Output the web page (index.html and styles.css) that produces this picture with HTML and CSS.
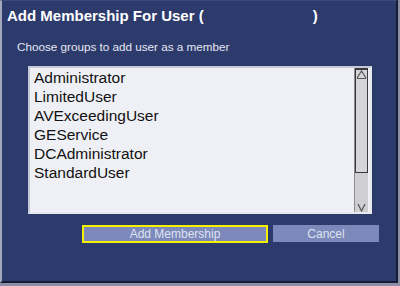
FILE: index.html
```html
<!DOCTYPE html>
<html lang="en">
<head>
    <meta charset="UTF-8">
    <title>Add Membership For User</title>
    <link rel="stylesheet" href="styles.css">
</head>
<body>
    <div class="dialog">
        <h1>Add Membership For User (<span class="user-name"></span>)</h1>
        <p class="hint">Choose groups to add user as a member</p>

        <div class="listbox">
            <ul class="group-list">
                <li>Administrator</li>
                <li>LimitedUser</li>
                <li>AVExceedingUser</li>
                <li>GEService</li>
                <li>DCAdministrator</li>
                <li>StandardUser</li>
            </ul>
            <div class="scrollbar">
                <div class="thumb">
                    <svg width="11" height="9" viewBox="0 0 11 9"><path d="M1 8 L5.5 1 L10 8" fill="none" stroke="#555" stroke-width="1.2"/><path d="M1 8.5 H10" stroke="#555"/></svg>
                </div>
                <div class="arrow-down">
                    <svg width="11" height="9" viewBox="0 0 11 9"><path d="M2 1 L5.5 8 L9 1" fill="none" stroke="#555" stroke-width="1.2"/></svg>
                </div>
            </div>
        </div>

        <div class="actions">
            <button class="btn btn-primary" type="button">Add Membership</button>
            <button class="btn" type="button">Cancel</button>
        </div>
    </div>
</body>
</html>
```

FILE: styles.css
```css
html, body {
    margin: 0;
    height: 100%;
    background: #8a8fa6;
}

body {
    font-family: 'Liberation Sans', Arial, sans-serif;
}

.dialog {
    box-sizing: border-box;
    width: 398px;
    height: 283px;
    background: #2d3a6c;
    border-left: 2px solid #a4a8bc;
    border-top: 1px solid #39477a;
    border-right: 2px solid #161c36;
    border-bottom: 2px solid #161c36;
    padding: 5px 0 0 5px;
    color: #fff;
}

.dialog h1 {
    margin: 0;
    font-size: 15px;
    font-weight: bold;
    line-height: 20px;
    white-space: pre;
}

.user-name {
    display: inline-block;
    width: 109px;
}

.hint {
    margin: 14px 0 0 10px;
    font-size: 11.7px;
    line-height: 13px;
    color: #e4e7f2;
}

.listbox {
    box-sizing: border-box;
    width: 344px;
    height: 148px;
    margin: 13px 0 0 21px;
    background: #eff0f5;
    border: 2px solid #c5c8d6;
    border-right-color: #e8e9f0;
    border-bottom-color: #e8e9f0;
    display: flex;
    justify-content: space-between;
    padding-right: 2px;
}

.group-list {
    list-style: none;
    margin: 0;
    padding: 0 0 0 4px;
    font-size: 15.5px;
    line-height: 19px;
    color: #111;
}

.scrollbar {
    width: 13px;
    background: #cfcfd2;
    border-left: 1px solid #8b8b90;
    display: flex;
    flex-direction: column;
    justify-content: space-between;
}

.thumb {
    height: 102px;
    background: #d6d6d8;
    border: 1px solid #3a3a3e;
    border-top-width: 2px;
    display: flex;
    justify-content: center;
    align-items: flex-start;
}

.arrow-down {
    height: 14px;
    display: flex;
    justify-content: center;
    align-items: flex-end;
}

.actions {
    display: flex;
    gap: 5px;
    margin: 11px 0 0 75px;
}

.btn {
    box-sizing: border-box;
    height: 17px;
    width: 106px;
    padding: 0;
    border: none;
    background: #7d88bb;
    color: #dfe3f0;
    font-family: 'Liberation Sans', Arial, sans-serif;
    font-size: 12px;
}

.btn-primary {
    width: 186px;
    height: 18px;
    border: 2px solid #f4f000;
}
```
